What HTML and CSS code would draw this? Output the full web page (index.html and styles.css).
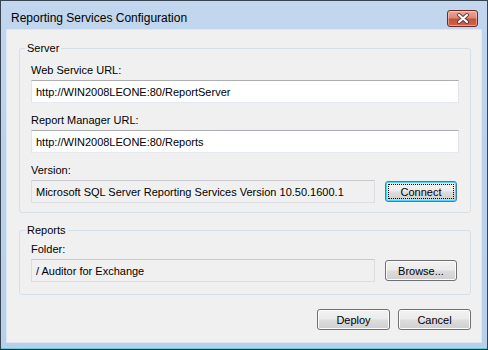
FILE: index.html
```html
<!DOCTYPE html>
<html lang="en">
<head>
    <meta charset="UTF-8">
    <meta name="viewport" content="width=device-width, initial-scale=1.0">
    <title>Reporting Services Configuration</title>
    <link rel="stylesheet" href="styles.css">
</head>
<body>
    <div class="window">
        <div class="titlebar">
            <span class="title">Reporting Services Configuration</span>
            <button class="close" aria-label="Close">
                <svg width="14" height="11" viewBox="0 0 14 11">
                    <path d="M3 2 L11 9 M11 2 L3 9" stroke="#5b3a36" stroke-width="4" stroke-linecap="round"/>
                    <path d="M3 2 L11 9 M11 2 L3 9" stroke="#ffffff" stroke-width="2.2" stroke-linecap="round"/>
                </svg>
            </button>
        </div>
        <div class="client">
            <fieldset class="group">
                <legend>Server</legend>
                <label class="field-label">Web Service URL:</label>
                <input class="textbox" type="text" value="http://WIN2008LEONE:80/ReportServer">
                <label class="field-label">Report Manager URL:</label>
                <input class="textbox" type="text" value="http://WIN2008LEONE:80/Reports">
                <label class="field-label">Version:</label>
                <div class="row">
                    <input class="textbox readonly" type="text" readonly value="Microsoft SQL Server Reporting Services Version 10.50.1600.1">
                    <button class="btn default">Connect</button>
                </div>
            </fieldset>
            <fieldset class="group reports">
                <legend>Reports</legend>
                <label class="field-label">Folder:</label>
                <div class="row">
                    <input class="textbox readonly" type="text" readonly value="/ Auditor for Exchange">
                    <button class="btn">Browse...</button>
                </div>
            </fieldset>
            <div class="actions">
                <button class="btn">Deploy</button>
                <button class="btn">Cancel</button>
            </div>
        </div>
    </div>
</body>
</html>
```

FILE: styles.css
```css
body {
    margin: 0;
    font-family: "Liberation Sans", Arial, sans-serif;
    font-size: 11px;
    color: #000;
}
.window {
    width: 488px;
    height: 350px;
    box-sizing: border-box;
    border: 1px solid #3a4554;
    border-bottom-color: #1d2a35;
    padding: 0 6px 7px;
    display: flex;
    flex-direction: column;
    background: linear-gradient(180deg, #c2d7ee 0%, #bcd2ec 40%, #b9d0ea 100%);
    box-shadow: inset 0 -1px 0 #5fcfe6;
}
.titlebar {
    height: 29px;
    box-sizing: border-box;
    padding: 9px 3px 0 4px;
    display: flex;
    align-items: flex-start;
    justify-content: space-between;
}
.title {
    font-size: 12px;
    line-height: 16px;
    color: #000;
}
.close {
    width: 31px;
    height: 17px;
    padding: 0;
    display: flex;
    align-items: center;
    justify-content: center;
    border: 1px solid #6b2b2b;
    border-radius: 3px;
    background: linear-gradient(180deg, #e9a99b 0%, #dc8a77 45%, #c7503a 55%, #d0644c 100%);
    box-shadow: inset 0 0 0 1px rgba(255, 220, 210, 0.5);
}
.client {
    flex: 1;
    background: #f0f0f0;
    padding: 11px 10px 0 12px;
    box-shadow: 0 0 0 1px #dde7f2;
}
.group {
    margin: 0;
    padding: 0 11px 9px;
    border: 1px solid #d5dfe5;
    border-radius: 3px;
    min-width: 0;
}
.group legend {
    margin-left: -6px;
    padding: 0 2px;
    line-height: 14px;
}
.reports {
    margin-top: 10px;
    padding-bottom: 12px;
}
.field-label {
    display: block;
    margin-top: 10px;
    margin-bottom: 2px;
    line-height: 15px;
}
.group .field-label:first-of-type {
    margin-top: 8px;
}
.reports .field-label:first-of-type {
    margin-top: 5px;
}
.textbox {
    display: block;
    width: 100%;
    height: 23px;
    box-sizing: border-box;
    margin: 0;
    padding: 0 4px;
    border: 1px solid #e2e3ea;
    border-top-color: #abadb3;
    border-bottom-color: #e3e9ef;
    background: #fff;
    font-family: inherit;
    font-size: 11px;
    color: #000;
    outline: none;
}
.readonly {
    background: #f0f0f0;
    border-color: #dadde2;
    border-top-color: #c8cace;
}
.row {
    display: flex;
    align-items: center;
    gap: 10px;
}
.row .textbox {
    flex: 0 0 344px;
}
.btn {
    width: 73px;
    height: 21px;
    padding: 0;
    border: 1px solid #707070;
    border-radius: 3px;
    background: linear-gradient(180deg, #f2f2f2 0%, #ebebeb 48%, #dddddd 52%, #cfcfcf 100%);
    box-shadow: inset 0 0 0 1px #fcfcfc;
    font-family: inherit;
    font-size: 11px;
    color: #000;
}
.row .btn {
    width: 72px;
}
.default {
    border-color: #3c7fb1;
    box-shadow: inset 0 0 0 1px #48d8fb;
    outline: 1px dotted #000;
    outline-offset: -4px;
}
.actions {
    display: flex;
    justify-content: flex-end;
    gap: 8px;
    margin-top: 14px;
}
```
